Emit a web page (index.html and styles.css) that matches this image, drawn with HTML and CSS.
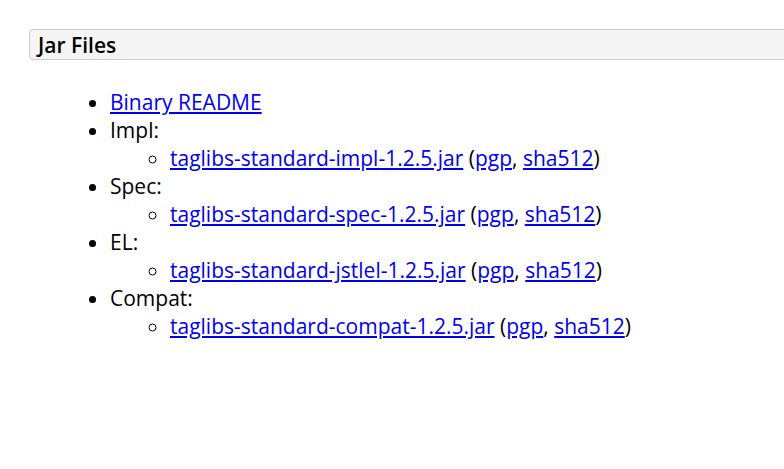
FILE: index.html
```html
<!DOCTYPE html>
<html>
<head>
<meta charset="utf-8">
<link rel="stylesheet" href="styles.css">
</head>
<body>
<div class="page">
  <h3 class="section-title">Jar Files</h3>
  <ul class="files">
    <li><a href="#">Binary README</a></li>
    <li>Impl:
      <ul class="sub">
        <li><a href="#">taglibs-standard-impl-1.2.5.jar</a> (<a href="#">pgp</a>, <a href="#">sha512</a>)</li>
      </ul>
    </li>
    <li>Spec:
      <ul class="sub">
        <li><a href="#">taglibs-standard-spec-1.2.5.jar</a> (<a href="#">pgp</a>, <a href="#">sha512</a>)</li>
      </ul>
    </li>
    <li>EL:
      <ul class="sub">
        <li><a href="#">taglibs-standard-jstlel-1.2.5.jar</a> (<a href="#">pgp</a>, <a href="#">sha512</a>)</li>
      </ul>
    </li>
    <li>Compat:
      <ul class="sub">
        <li><a href="#">taglibs-standard-compat-1.2.5.jar</a> (<a href="#">pgp</a>, <a href="#">sha512</a>)</li>
      </ul>
    </li>
  </ul>
</div>
</body>
</html>
```
FILE: styles.css
```css
html, body {
  margin: 0;
  padding: 0;
  overflow: hidden;
  background: #fff;
}
body {
  font-family: "Open Sans", "Noto Sans", sans-serif;
  font-size: 21px;
  line-height: 28px;
  color: #000;
}
.page {
  padding: 29px 0 0 29px;
}
.section-title {
  margin: 0 -20px 0 0;
  padding: 1px 8px 0;
  height: 28px;
  line-height: 29px;
  font-size: 21px;
  font-weight: 600;
  background: #f5f5f5;
  border: 1px solid #cccccc;
  border-radius: 4px;
}
.files {
  margin: 28px 0 0 21px;
  padding-left: 60px;
  list-style: disc;
}
.sub {
  margin: 0;
  padding-left: 60px;
  list-style: circle;
}
a {
  color: #0000ee;
  text-decoration: underline;
}
```
